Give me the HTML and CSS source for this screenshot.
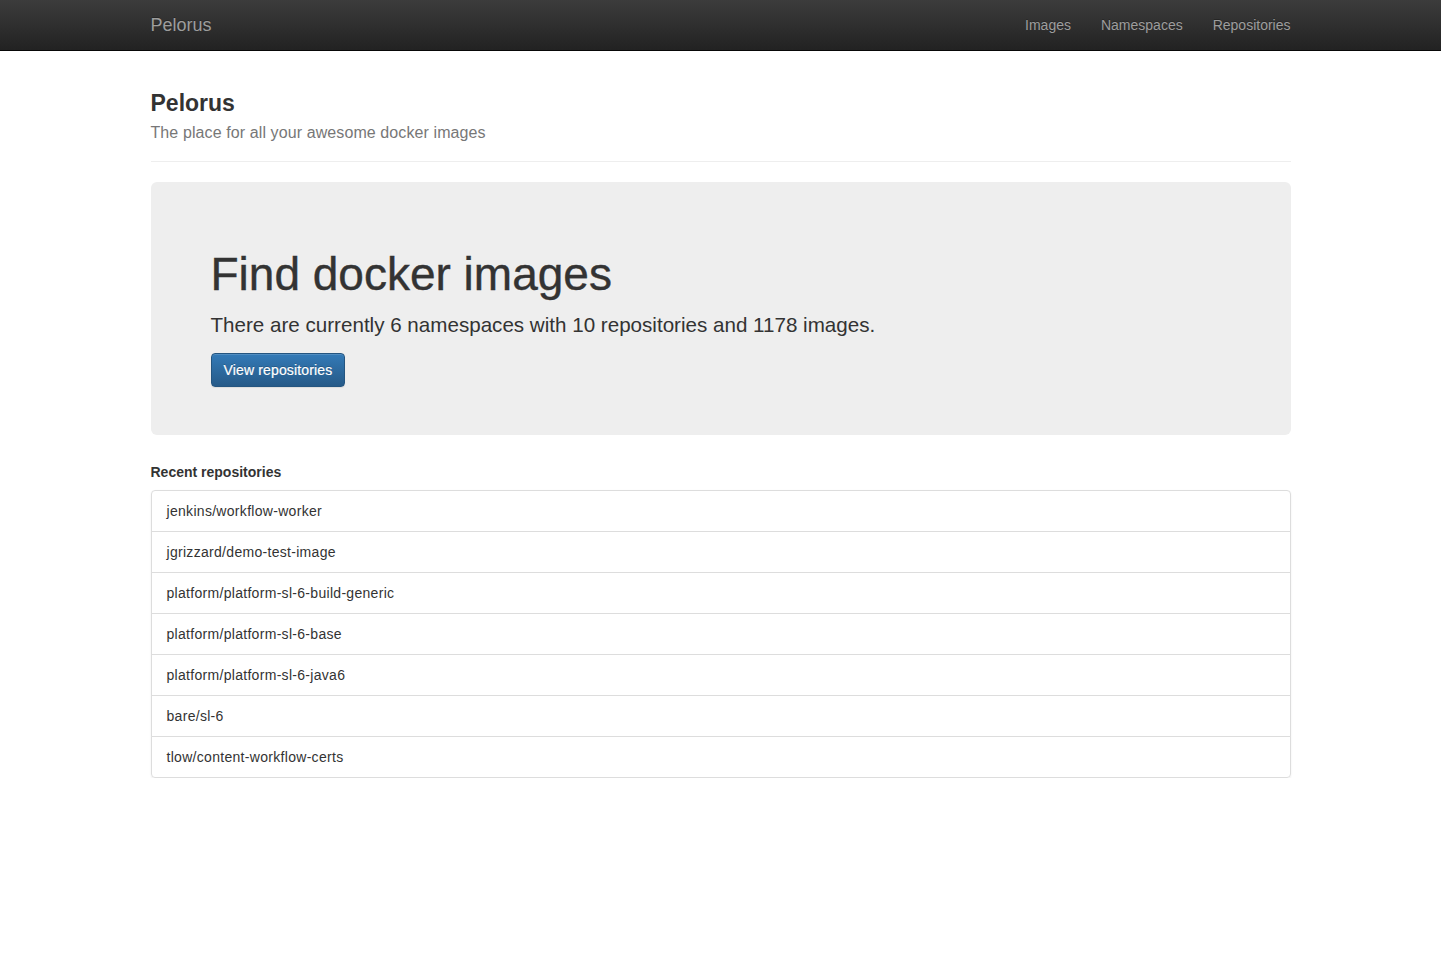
FILE: index.html
```html
<!DOCTYPE html>
<html lang="en">
<head>
<meta charset="utf-8">
<title>Pelorus</title>
<link rel="stylesheet" href="styles.css">
</head>
<body>
<nav class="navbar">
  <div class="container navbar-inner">
    <a class="brand" href="#">Pelorus</a>
    <ul class="nav">
      <li><a href="#">Images</a></li>
      <li><a href="#">Namespaces</a></li>
      <li><a href="#">Repositories</a></li>
    </ul>
  </div>
</nav>
<main class="container">
  <header class="page-header">
    <h1 class="title">Pelorus</h1>
    <p class="subtitle">The place for all your awesome docker images</p>
  </header>
  <section class="jumbotron">
    <h1 class="jumbo-title">Find docker images</h1>
    <p class="jumbo-text">There are currently 6 namespaces with 10 repositories and 1178 images.</p>
    <p class="jumbo-actions"><a class="btn" href="#">View repositories</a></p>
  </section>
  <h5 class="section-title">Recent repositories</h5>
  <div class="list-group">
    <a class="list-item" href="#">jenkins/workflow-worker</a>
    <a class="list-item" href="#">jgrizzard/demo-test-image</a>
    <a class="list-item" href="#">platform/platform-sl-6-build-generic</a>
    <a class="list-item" href="#">platform/platform-sl-6-base</a>
    <a class="list-item" href="#">platform/platform-sl-6-java6</a>
    <a class="list-item" href="#">bare/sl-6</a>
    <a class="list-item" href="#">tlow/content-workflow-certs</a>
  </div>
</main>
</body>
</html>
```

FILE: styles.css
```css
* { box-sizing: border-box; }
html, body { margin: 0; padding: 0; }
body {
  font-family: "Liberation Sans", Arial, Helvetica, sans-serif;
  font-size: 14px;
  line-height: 1.42857;
  color: #333;
  background: #fff;
}
a { text-decoration: none; }
.container {
  width: 1140px;
  margin: 0 auto;
}
.navbar {
  height: 51px;
  background: linear-gradient(to bottom, #3c3c3c 0, #222 100%);
  border-bottom: 1px solid #080808;
}
.navbar-inner {
  display: flex;
  justify-content: space-between;
  align-items: stretch;
  height: 50px;
}
.brand {
  font-size: 18px;
  line-height: 20px;
  padding: 15px 0;
  color: #9d9d9d;
  text-shadow: 0 -1px 0 rgba(0,0,0,.25);
}
.nav {
  display: flex;
  list-style: none;
  margin: 0 -15px 0 0;
  padding: 0;
}
.nav a {
  display: block;
  padding: 15px;
  line-height: 20px;
  color: #9d9d9d;
  text-shadow: 0 -1px 0 rgba(0,0,0,.25);
}
.page-header {
  padding: 39px 0 17px;
  border-bottom: 1px solid #eee;
  margin-bottom: 20px;
}
.title {
  margin: 0;
  font-size: 23px;
  line-height: 26px;
  font-weight: bold;
  color: #333;
}
.subtitle {
  margin: 6px 0 0;
  font-size: 16px;
  line-height: 22px;
  color: #777;
  letter-spacing: 0.1px;
}
.jumbotron {
  background: #eee;
  border-radius: 6px;
  padding: 68px 60px 48px;
  margin-bottom: 30px;
}
.jumbo-title {
  margin: 0 0 10px;
  font-size: 46px;
  line-height: 49.5px;
  font-weight: normal;
  color: #333;
  -webkit-text-stroke: 0.4px #333;
}
.jumbo-text {
  margin: 0 0 13px;
  font-size: 20.6px;
  line-height: 30px;
  font-weight: normal;
}
.jumbo-actions { margin: 0; line-height: 0; }
.btn {
  display: inline-block;
  padding: 6px 12px;
  font-size: 14px;
  line-height: 20px;
  color: #fff;
  letter-spacing: 0.15px;
  -webkit-text-stroke: 0.2px #fff;
  border: 1px solid #245580;
  border-radius: 4px;
  background: linear-gradient(to bottom, #337ab7 0, #265a88 100%);
  text-shadow: 0 -1px 0 rgba(0,0,0,.2);
  box-shadow: inset 0 1px 0 rgba(255,255,255,.15), 0 1px 1px rgba(0,0,0,.075);
}
.section-title {
  margin: 0 0 10px;
  font-size: 14px;
  line-height: 1.1;
  font-weight: bold;
  color: #333;
}
.list-group {
  display: flex;
  flex-direction: column;
  border-radius: 4px;
  box-shadow: 0 1px 2px rgba(0,0,0,.075);
}
.list-item {
  display: block;
  padding: 10px 15px;
  line-height: 20px;
  color: #333;
  letter-spacing: 0.3px;
  background: #fff;
  border: 1px solid #ddd;
  margin-bottom: -1px;
}
.list-item:first-child { border-radius: 4px 4px 0 0; }
.list-item:last-child { border-radius: 0 0 4px 4px; margin-bottom: 0; }
```
